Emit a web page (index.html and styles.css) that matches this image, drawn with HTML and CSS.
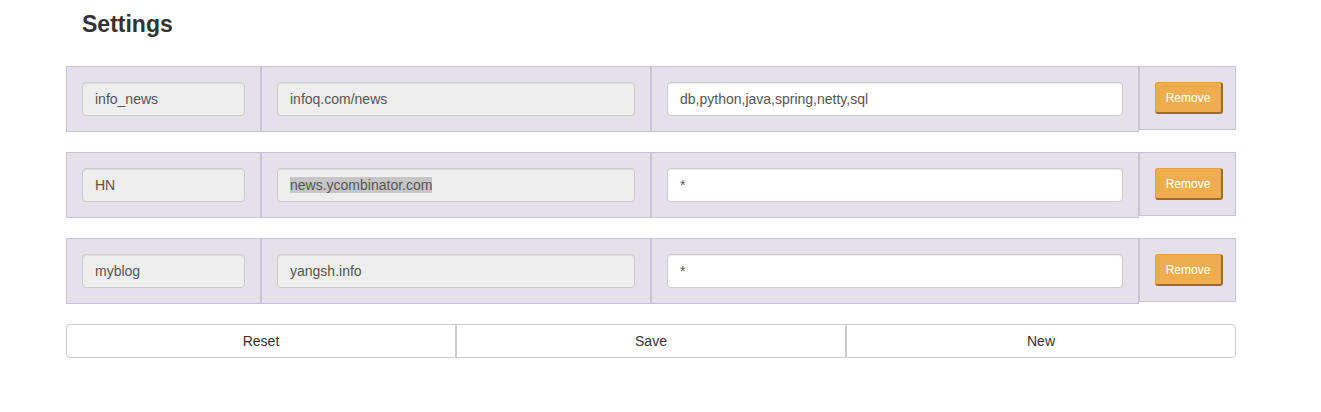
FILE: index.html
```html
<!DOCTYPE html>
<html>
<head>
<meta charset="utf-8">
<link rel="stylesheet" href="styles.css">
</head>
<body>
<div class="container">
  <h2 class="title">Settings</h2>

  <div class="row">
    <div class="col col-name"><div class="field disabled">info_news</div></div>
    <div class="col col-url"><div class="field disabled">infoq.com/news</div></div>
    <div class="col col-tags"><div class="field">db,python,java,spring,netty,sql</div></div>
    <div class="col col-act"><button class="remove">Remove</button></div>
  </div>

  <div class="row">
    <div class="col col-name"><div class="field disabled">HN</div></div>
    <div class="col col-url"><div class="field disabled"><span class="sel">news.ycombinator.com</span></div></div>
    <div class="col col-tags"><div class="field">*</div></div>
    <div class="col col-act"><button class="remove">Remove</button></div>
  </div>

  <div class="row">
    <div class="col col-name"><div class="field disabled">myblog</div></div>
    <div class="col col-url"><div class="field disabled">yangsh.info</div></div>
    <div class="col col-tags"><div class="field">*</div></div>
    <div class="col col-act"><button class="remove">Remove</button></div>
  </div>

  <div class="actions">
    <button class="btn">Reset</button>
    <button class="btn">Save</button>
    <button class="btn">New</button>
  </div>
</div>
</body>
</html>
```

FILE: styles.css
```css
* { box-sizing: border-box; }
html, body { margin: 0; padding: 0; background: #fff; }
body {
  font-family: "Liberation Sans", Arial, Helvetica, sans-serif;
  font-size: 14px;
  color: #333;
}
.container {
  width: 1170px;
  margin-left: 66px;
}
.title {
  margin: 0;
  padding: 10px 0 0 16px;
  height: 66px;
  font-size: 23px;
  font-weight: bold;
  line-height: 28px;
  color: #333;
}
.row {
  display: flex;
  align-items: flex-start;
  margin-bottom: 20px;
}
.col {
  border: 1px solid #c9c3da;
  background: #e4e1eb;
  padding: 15px;
}
.col-name { width: 195px; }
.col-url { width: 390px; }
.col-tags { width: 487.5px; }
.col-act { width: 97.5px; }
.field {
  height: 34px;
  border: 1px solid #ccc;
  border-radius: 4px;
  background: #fff;
  padding: 6px 12px;
  font-size: 14px;
  line-height: 20px;
  color: #555;
  box-shadow: inset 0 1px 1px rgba(0,0,0,0.075);
  white-space: nowrap;
  overflow: hidden;
}
.field.disabled { background: #eee; }
.sel { background: #c6c6c6; }
.remove {
  display: block;
  width: 68px;
  height: 32px;
  padding: 0;
  font-family: "Liberation Sans", Arial, sans-serif;
  font-size: 12px;
  color: #fff;
  background: #efad4e;
  border: 1px solid #e6a03c;
  border-right: 2px solid #a16a25;
  border-bottom: 2px solid #a16a25;
  border-radius: 3px;
  text-shadow: 0 0 1px rgba(255,255,255,0.3);
}
.actions {
  display: flex;
}
.btn {
  width: 390px;
  height: 34px;
  padding: 0;
  background: #fff;
  border: 1px solid #ccc;
  border-radius: 0;
  font-family: "Liberation Sans", Arial, sans-serif;
  font-size: 14px;
  color: #333;
}
.btn:first-child { border-radius: 4px 0 0 4px; }
.btn:last-child { border-radius: 0 4px 4px 0; }
```
